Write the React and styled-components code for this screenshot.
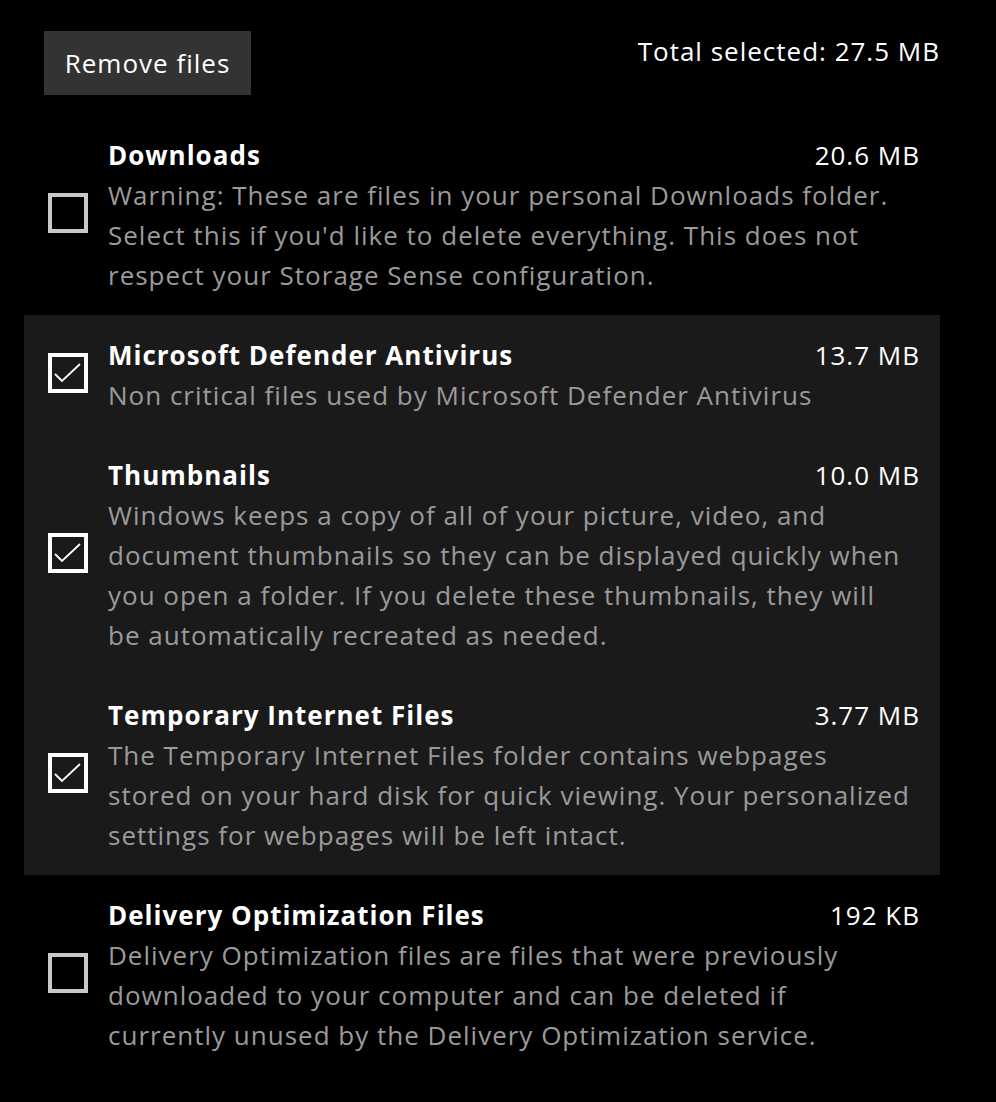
import React from "react";
import styled, { createGlobalStyle } from "styled-components";

const GlobalStyle = createGlobalStyle`
  body {
    margin: 0;
    background: #000;
    font-family: "Open Sans", "Noto Sans", sans-serif;
    color: #fff;
  }
`;

const Page = styled.div`
  width: 996px;
  min-height: 1102px;
  background: #000;
  padding-top: 31px;
  box-sizing: border-box;
  letter-spacing: 1px;
`;

const Header = styled.div`
  display: flex;
  justify-content: space-between;
  align-items: flex-start;
  padding: 0 56px 0 44px;
`;

const RemoveButton = styled.button`
  height: 64px;
  width: 207px;
  background: #333;
  border: none;
  color: #fff;
  font-family: inherit;
  font-size: 26px;
  letter-spacing: 1px;
  padding: 0;
  cursor: pointer;
`;

const Total = styled.div`
  font-size: 26px;
  line-height: 40px;
`;

const List = styled.div`
  margin: 20px 0 0 24px;
  width: 916px;
`;

const Group = styled.div`
  background: ${(p) => (p.$highlight ? "#1a1a1a" : "transparent")};
`;

const Item = styled.div`
  display: flex;
  align-items: center;
  gap: 20px;
  padding: 20px 20px 20px 24px;
`;

const Box = styled.div`
  flex: 0 0 auto;
  width: 40px;
  height: 40px;
  box-sizing: border-box;
  border: 4px solid ${(p) => (p.$checked ? "#fff" : "#c8c8c8")};
  margin-top: -4px;
  display: flex;
  align-items: center;
  justify-content: center;
`;

const Body = styled.div`
  flex: 1;
  font-size: 26px;
  line-height: 40px;
`;

const TitleRow = styled.div`
  display: flex;
  justify-content: space-between;
`;

const Title = styled.div`
  font-weight: 700;
`;

const Size = styled.div`
  color: #fff;
`;

const Desc = styled.div`
  color: #9a9a9a;
  white-space: nowrap;
`;

const Check = () => (
  <svg width="32" height="32" viewBox="0 0 32 32">
    <polyline
      points="3,17 10,24 28,7"
      fill="none"
      stroke="#fff"
      strokeWidth="1.8"
    />
  </svg>
);

const items = [
  {
    title: "Downloads",
    size: "20.6 MB",
    checked: false,
    lines: [
      "Warning: These are files in your personal Downloads folder.",
      "Select this if you'd like to delete everything. This does not",
      "respect your Storage Sense configuration.",
    ],
  },
  {
    title: "Microsoft Defender Antivirus",
    size: "13.7 MB",
    checked: true,
    lines: ["Non critical files used by Microsoft Defender Antivirus"],
  },
  {
    title: "Thumbnails",
    size: "10.0 MB",
    checked: true,
    lines: [
      "Windows keeps a copy of all of your picture, video, and",
      "document thumbnails so they can be displayed quickly when",
      "you open a folder. If you delete these thumbnails, they will",
      "be automatically recreated as needed.",
    ],
  },
  {
    title: "Temporary Internet Files",
    size: "3.77 MB",
    checked: true,
    lines: [
      "The Temporary Internet Files folder contains webpages",
      "stored on your hard disk for quick viewing. Your personalized",
      "settings for webpages will be left intact.",
    ],
  },
  {
    title: "Delivery Optimization Files",
    size: "192 KB",
    checked: false,
    lines: [
      "Delivery Optimization files are files that were previously",
      "downloaded to your computer and can be deleted if",
      "currently unused by the Delivery Optimization service.",
    ],
  },
];

const Row = ({ item }) => (
  <Item>
    <Box $checked={item.checked}>{item.checked && <Check />}</Box>
    <Body>
      <TitleRow>
        <Title>{item.title}</Title>
        <Size>{item.size}</Size>
      </TitleRow>
      {item.lines.map((l) => (
        <Desc key={l}>{l}</Desc>
      ))}
    </Body>
  </Item>
);

export default function App() {
  return (
    <>
      <GlobalStyle />
      <Page>
        <Header>
          <RemoveButton>Remove files</RemoveButton>
          <Total>Total selected: 27.5 MB</Total>
        </Header>
        <List>
          <Group>
            <Row item={items[0]} />
          </Group>
          <Group $highlight>
            {items.slice(1, 4).map((it) => (
              <Row key={it.title} item={it} />
            ))}
          </Group>
          <Group>
            <Row item={items[4]} />
          </Group>
        </List>
      </Page>
    </>
  );
}
